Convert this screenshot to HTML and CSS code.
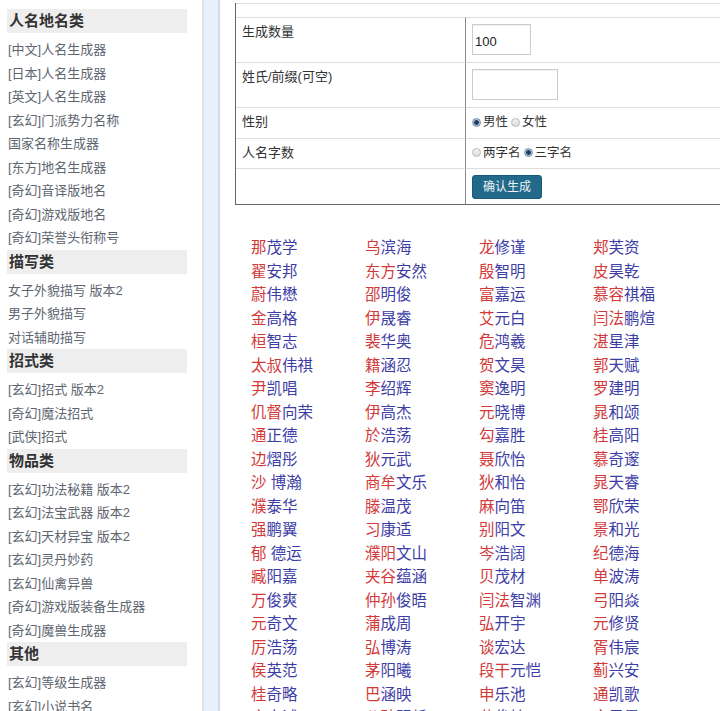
FILE: index.html
```html
<!DOCTYPE html>
<html lang="zh-CN">
<head>
<meta charset="utf-8">
<title>人名生成器</title>
<link rel="stylesheet" href="styles.css">
</head>
<body>
<div class="page">
  <aside class="sidebar">
    <section class="group">
      <h3 class="group-title">人名地名类</h3>
      <ul class="links">
        <li><a href="#">[中文]人名生成器</a></li>
        <li><a href="#">[日本]人名生成器</a></li>
        <li><a href="#">[英文]人名生成器</a></li>
        <li><a href="#">[玄幻]门派势力名称</a></li>
        <li><a href="#">国家名称生成器</a></li>
        <li><a href="#">[东方]地名生成器</a></li>
        <li><a href="#">[奇幻]音译版地名</a></li>
        <li><a href="#">[奇幻]游戏版地名</a></li>
        <li><a href="#">[奇幻]荣誉头衔称号</a></li>
      </ul>
    </section>
    <section class="group">
      <h3 class="group-title">描写类</h3>
      <ul class="links">
        <li><a href="#">女子外貌描写 版本2</a></li>
        <li><a href="#">男子外貌描写</a></li>
        <li><a href="#">对话辅助描写</a></li>
      </ul>
    </section>
    <section class="group">
      <h3 class="group-title">招式类</h3>
      <ul class="links">
        <li><a href="#">[玄幻]招式 版本2</a></li>
        <li><a href="#">[奇幻]魔法招式</a></li>
        <li><a href="#">[武侠]招式</a></li>
      </ul>
    </section>
    <section class="group">
      <h3 class="group-title">物品类</h3>
      <ul class="links">
        <li><a href="#">[玄幻]功法秘籍 版本2</a></li>
        <li><a href="#">[玄幻]法宝武器 版本2</a></li>
        <li><a href="#">[玄幻]天材异宝 版本2</a></li>
        <li><a href="#">[玄幻]灵丹妙药</a></li>
        <li><a href="#">[玄幻]仙禽异兽</a></li>
        <li><a href="#">[奇幻]游戏版装备生成器</a></li>
        <li><a href="#">[奇幻]魔兽生成器</a></li>
      </ul>
    </section>
    <section class="group">
      <h3 class="group-title">其他</h3>
      <ul class="links">
        <li><a href="#">[玄幻]等级生成器</a></li>
        <li><a href="#">[玄幻]小说书名</a></li>
        <li><a href="#">[玄幻]境界生成器</a></li>
      </ul>
    </section>
  </aside>
  <div class="divider"></div>
  <main class="main">
    <table class="form">
      <tr class="cap"><td colspan="2"></td></tr>
      <tr>
        <td class="label">生成数量</td>
        <td class="field"><input class="txt num" type="text" value="100"></td>
      </tr>
      <tr>
        <td class="label">姓氏/前缀(可空)</td>
        <td class="field"><input class="txt pre" type="text" value=""></td>
      </tr>
      <tr>
        <td class="label">性别</td>
        <td class="field"><span class="opt"><span class="radio on"></span>男性</span><span class="opt"><span class="radio"></span>女性</span></td>
      </tr>
      <tr>
        <td class="label">人名字数</td>
        <td class="field"><span class="opt"><span class="radio"></span>两字名</span><span class="opt"><span class="radio on"></span>三字名</span></td>
      </tr>
      <tr class="actions">
        <td class="label"></td>
        <td class="field"><button class="btn" type="button">确认生成</button></td>
      </tr>
    </table>
    <ul class="names">
      <li><b>那</b>茂学</li><li><b>乌</b>滨海</li><li><b>龙</b>修谨</li><li><b>郏</b>芙资</li>
      <li><b>翟</b>安邦</li><li><b>东方</b>安然</li><li><b>殷</b>智明</li><li><b>皮</b>昊乾</li>
      <li><b>蔚</b>伟懋</li><li><b>邵</b>明俊</li><li><b>富</b>嘉运</li><li><b>慕容</b>祺福</li>
      <li><b>金</b>高格</li><li><b>伊</b>晟睿</li><li><b>艾</b>元白</li><li><b>闫法</b>鹏煊</li>
      <li><b>桓</b>智志</li><li><b>裴</b>华奥</li><li><b>危</b>鸿羲</li><li><b>湛</b>星津</li>
      <li><b>太叔</b>伟祺</li><li><b>籍</b>涵忍</li><li><b>贺</b>文昊</li><li><b>郭</b>天赋</li>
      <li><b>尹</b>凯唱</li><li><b>李</b>绍辉</li><li><b>窦</b>逸明</li><li><b>罗</b>建明</li>
      <li><b>仉督</b>向荣</li><li><b>伊</b>高杰</li><li><b>元</b>晓博</li><li><b>晁</b>和颂</li>
      <li><b>通</b>正德</li><li><b>於</b>浩荡</li><li><b>勾</b>嘉胜</li><li><b>桂</b>高阳</li>
      <li><b>边</b>熠彤</li><li><b>狄</b>元武</li><li><b>聂</b>欣怡</li><li><b>慕</b>奇邃</li>
      <li><b>沙</b> 博瀚</li><li><b>商牟</b>文乐</li><li><b>狄</b>和怡</li><li><b>晁</b>天睿</li>
      <li><b>濮</b>泰华</li><li><b>滕</b>温茂</li><li><b>麻</b>向笛</li><li><b>鄂</b>欣荣</li>
      <li><b>强</b>鹏翼</li><li><b>习</b>康适</li><li><b>别</b>阳文</li><li><b>景</b>和光</li>
      <li><b>郁</b> 德运</li><li><b>濮阳</b>文山</li><li><b>岑</b>浩阔</li><li><b>纪</b>德海</li>
      <li><b>臧</b>阳嘉</li><li><b>夹谷</b>蕴涵</li><li><b>贝</b>茂材</li><li><b>单</b>波涛</li>
      <li><b>万</b>俊爽</li><li><b>仲孙</b>俊晤</li><li><b>闫法</b>智渊</li><li><b>弓</b>阳焱</li>
      <li><b>元</b>奇文</li><li><b>蒲</b>成周</li><li><b>弘</b>开宇</li><li><b>元</b>修贤</li>
      <li><b>厉</b>浩荡</li><li><b>弘</b>博涛</li><li><b>谈</b>宏达</li><li><b>胥</b>伟宸</li>
      <li><b>侯</b>英范</li><li><b>茅</b>阳曦</li><li><b>段干</b>元恺</li><li><b>蓟</b>兴安</li>
      <li><b>桂</b>奇略</li><li><b>巴</b>涵映</li><li><b>申</b>乐池</li><li><b>通</b>凯歌</li>
      <li><b>宋</b>志诚</li><li><b>公孙</b>明哲</li><li><b>黄</b>俊楠</li><li><b>文</b>子墨</li>
    </ul>
  </main>
</div>
</body>
</html>
```

FILE: styles.css
```css
* {
  box-sizing: border-box;
}

html,
body {
  height: 100%;
  overflow: hidden;
}

body {
  margin: 0;
  background: #ffffff;
  font-family: "Liberation Sans", "Noto Sans CJK SC", sans-serif;
  color: #333333;
}

.page {
  display: flex;
  height: 100%;
}

/* ---------- sidebar ---------- */
.sidebar {
  flex: 0 0 202px;
  padding: 9px 15px 0 7px;
  background: #ffffff;
}

.group-title {
  margin: 0 0 5px;
  height: 24px;
  padding-left: 2px;
  line-height: 24px;
  font-size: 15px;
  font-weight: bold;
  color: #333333;
  background: #eeeeee;
}

.links {
  list-style: none;
  margin: 0;
  padding: 0 0 0 1px;
}

.links li {
  line-height: 23.5px;
  height: 23.5px;
  font-size: 13px;
  white-space: nowrap;
}

.links a {
  color: #5e6670;
  text-decoration: none;
}

/* ---------- divider strip ---------- */
.divider {
  flex: 0 0 18px;
  background: #e7f1fb;
  border-left: 2px solid #dde2e8;
  border-right: 2px solid #d6dce3;
}

/* ---------- main ---------- */
.main {
  flex: 1 1 auto;
  min-width: 0;
  overflow: hidden;
  padding: 3px 0 0 15px;
}

.form {
  width: 620px;
  border-collapse: separate;
  border-spacing: 0;
  border-left: 1px solid #666666;
  border-bottom: 1px solid #666666;
  font-size: 13px;
  color: #333333;
}

.form td {
  border-top: 1px solid #dddddd;
  padding: 6px 6px 7px;
  line-height: 16px;
  vertical-align: top;
}

.form .cap td {
  height: 14px;
  padding: 0;
}

.form .label {
  width: 230px;
  border-right: 1px solid #8a8a8a;
}

.form .cap td {
  border-right: none;
}

.form .actions td {
  padding-bottom: 5px;
}

.txt {
  display: block;
  height: 31px;
  margin: 0;
  padding: 4px 2px 0;
  border: 1px solid #cccccc;
  font-family: "Liberation Sans", sans-serif;
  font-size: 13px;
  color: #222222;
  background: #ffffff;
  box-shadow: inset 0 1px 1px rgba(0, 0, 0, 0.06);
  outline: none;
}

.txt.num {
  width: 59px;
}

.txt.pre {
  width: 86px;
}

.opt {
  display: inline-flex;
  align-items: center;
  margin-right: 3px;
  font-size: 12.5px;
  color: #333333;
}

.radio {
  display: inline-block;
  width: 9px;
  height: 9px;
  margin-right: 2px;
  border-radius: 50%;
  border: 1px solid #b9b9b9;
  background: linear-gradient(#f4f4f4, #dcdcdc);
}

.radio.on {
  border-color: #7d95ad;
  background: radial-gradient(circle, #1f3a63 0 2px, #a8bfd6 2.6px);
}

.btn {
  display: block;
  width: 70px;
  height: 24px;
  margin: 0;
  padding: 0;
  border: 1px solid #185b78;
  border-radius: 3px;
  background: #22698a;
  color: #eef4f7;
  font-family: "Liberation Sans", "Noto Sans CJK SC", sans-serif;
  font-size: 12px;
  line-height: 22px;
}

/* ---------- names ---------- */
.names {
  list-style: none;
  margin: 31px 0 0;
  padding: 0 0 0 16px;
  display: grid;
  grid-template-columns: repeat(4, 114px);
  font-size: 15.5px;
  line-height: 23.5px;
  color: #3d3da6;
}

.names li {
  white-space: pre;
}

.names b {
  font-weight: normal;
  color: #d23a3a;
}
```
